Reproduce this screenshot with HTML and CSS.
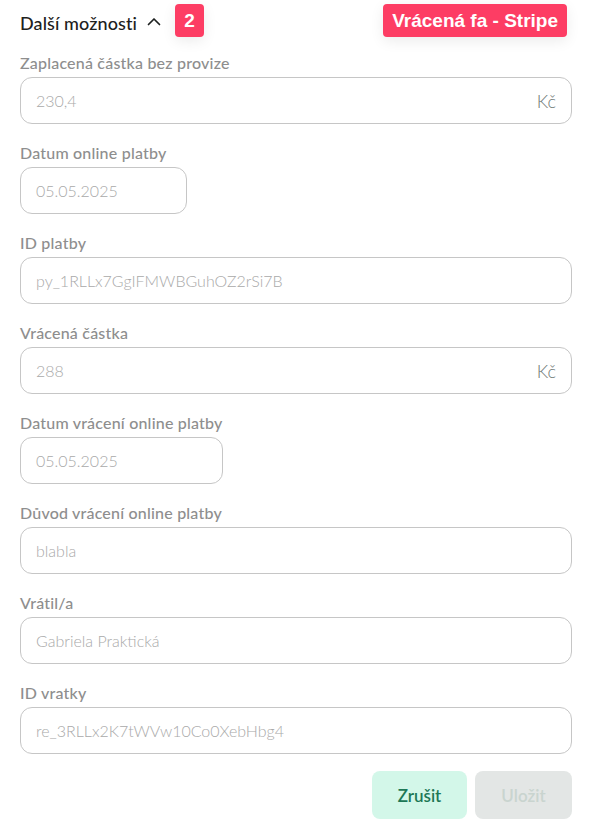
FILE: index.html
```html
<!DOCTYPE html>
<html lang="cs">
<head>
<meta charset="utf-8">
<link rel="stylesheet" href="styles.css">
</head>
<body>
<div class="panel">
  <div class="head">
    <div class="title-wrap">
      <span class="title">Další možnosti</span>
      <svg class="chev" width="14" height="9" viewBox="0 0 14 9"><path d="M1.5 7.5 L7 2 L12.5 7.5" fill="none" stroke="#1d2120" stroke-width="1.7" stroke-linecap="round" stroke-linejoin="round"/></svg>
      <span class="badge badge-num">2</span>
    </div>
    <span class="badge badge-tag">Vrácená fa - Stripe</span>
  </div>

  <div class="field">
    <div class="label">Zaplacená částka bez provize</div>
    <div class="input"><span>230,4</span><span class="unit">Kč</span></div>
  </div>
  <div class="field">
    <div class="label">Datum online platby</div>
    <div class="input date1"><span>05.05.2025</span></div>
  </div>
  <div class="field">
    <div class="label">ID platby</div>
    <div class="input"><span>py_1RLLx7GgIFMWBGuhOZ2rSi7B</span></div>
  </div>
  <div class="field">
    <div class="label">Vrácená částka</div>
    <div class="input"><span>288</span><span class="unit">Kč</span></div>
  </div>
  <div class="field">
    <div class="label">Datum vrácení online platby</div>
    <div class="input date2"><span>05.05.2025</span></div>
  </div>
  <div class="field">
    <div class="label">Důvod vrácení online platby</div>
    <div class="input"><span>blabla</span></div>
  </div>
  <div class="field">
    <div class="label">Vrátil/a</div>
    <div class="input"><span>Gabriela Praktická</span></div>
  </div>
  <div class="field">
    <div class="label">ID vratky</div>
    <div class="input"><span>re_3RLLx2K7tWVw10Co0XebHbg4</span></div>
  </div>

  <div class="actions">
    <button class="btn btn-cancel">Zrušit</button>
    <button class="btn btn-save">Uložit</button>
  </div>
</div>
</body>
</html>
```
FILE: styles.css
```css
* { box-sizing: border-box; }
html, body { margin: 0; padding: 0; background: #fff; }
body { font-family: "Lato", "Liberation Sans", sans-serif; }
.panel { width: 594px; padding: 4px 22px 0 20px; }
.head { display: flex; justify-content: space-between; align-items: center; height: 33px; margin-bottom: 16px; }
.title-wrap { display: flex; align-items: center; }
.title { font-size: 18px; font-weight: 500; letter-spacing: 0.1px; color: #1d2120; margin-top: 4px; }
.chev { margin-left: 10px; margin-top: 2px; }
.badge { background: #fd3d64; color: #fff; font-family: "Liberation Sans", Arial, sans-serif; font-weight: 700; font-size: 19px; height: 33px; line-height: 33px; padding: 0 8px; border-radius: 4px; box-shadow: 0 4px 14px rgba(0,0,0,0.08); }
.badge-tag { margin-right: 5px; padding: 0 9px; }
.badge-num { margin-left: 14px; width: 29px; padding: 0; text-align: center; font-size: 19px; }
.field { margin-bottom: 19px; }
.label { font-size: 16px; line-height: 20px; font-weight: 500; letter-spacing: 0.2px; color: #8e8e8e; margin-bottom: 4px; }
.input { height: 47px; border: 1px solid #c6c6c6; border-radius: 12px; display: flex; align-items: center; justify-content: space-between; padding: 0 15px 0 15px; font-size: 16px; font-weight: 300; color: #a9a9a9; }
.unit { color: #6f7a76; font-size: 18px; font-weight: 300; }
.date1 { width: 167px; }
.date2 { width: 203px; }
.actions { display: flex; justify-content: flex-end; gap: 8px; margin-top: -2px; }
.btn { height: 48px; border: none; border-radius: 8px; font-family: "Lato", sans-serif; font-size: 17px; font-weight: 600; }
.btn-cancel { width: 95px; background: #d3f7e9; color: #1d7856; }
.btn-save { width: 97px; background: #e3e6e5; color: #c9d4cf; }
```
